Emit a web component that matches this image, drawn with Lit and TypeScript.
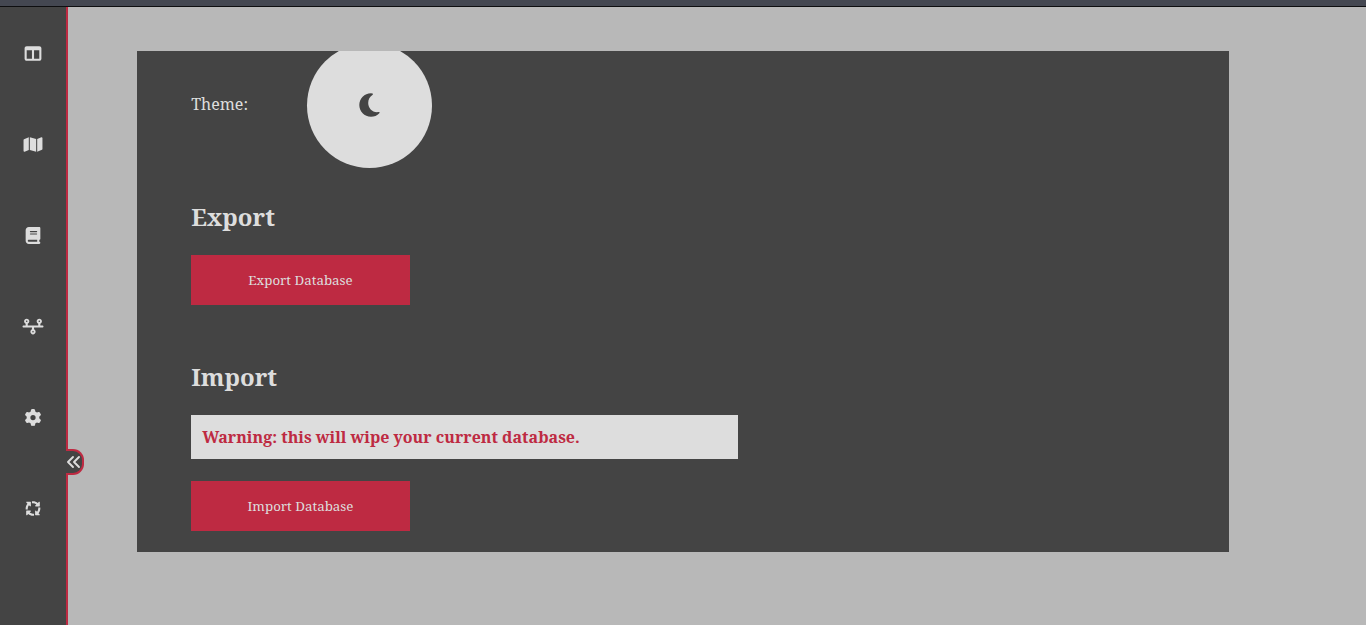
import { LitElement, html, css } from "lit";
import { customElement } from "lit/decorators.js";

interface NavItem {
  label: string;
  width: number;
  path: string;
}

// Icon em size in pixels, and the fixed box each icon is centred in.
const ICON_SIZE = 16.8;
const BOX_W = 24;
const BOX_H = 23;

const NAV: NavItem[] = [
  {
    label: "Dashboard",
    width: 512,
    path: "M0 96C0 60.7 28.7 32 64 32H448c35.3 0 64 28.7 64 64V416c0 35.3-28.7 64-64 64H64c-35.3 0-64-28.7-64-64V96zm64 64V416H224V160H64zm384 0H288V416H448V160z",
  },
  {
    label: "Map",
    width: 576,
    path: "M384 476.1L192 421.2V35.9L384 90.8V476.1zm32-1.2V88.4L543.1 37.5c15.8-6.3 32.9 5.3 32.9 22.3V394.6c0 9.8-6 18.6-15.1 22.3L416 474.8zM15.1 95.1L160 37.2V423.6L32.9 474.5C17.1 480.8 0 469.2 0 452.2V117.4c0-9.8 6-18.6 15.1-22.3z",
  },
  {
    label: "Journal",
    width: 448,
    path: "M96 0C43 0 0 43 0 96V416c0 53 43 96 96 96H384h32c17.7 0 32-14.3 32-32s-14.3-32-32-32V384c17.7 0 32-14.3 32-32V32c0-17.7-14.3-32-32-32H384 96zm0 384H352v64H96c-17.7 0-32-14.3-32-32s14.3-32 32-32zm32-246c0-8.8 7.2-16 16-16H336c8.8 0 16 7.2 16 16s-7.2 16-16 16H144c-8.8 0-16-7.2-16-16zm16 58H336c8.8 0 16 7.2 16 16s-7.2 16-16 16H144c-8.8 0-16-7.2-16-16s7.2-16 16-16z",
  },
  {
    label: "Timeline",
    width: 640,
    path: "M128 72a24 24 0 1 1 0 48 24 24 0 1 1 0-48zm32 97.3c28.3-12.3 48-40.5 48-73.3c0-44.2-35.8-80-80-80S48 51.8 48 96c0 32.8 19.7 61 48 73.3V224H32c-17.7 0-32 14.3-32 32s14.3 32 32 32H288v54.7c-28.3 12.3-48 40.5-48 73.3c0 44.2 35.8 80 80 80s80-35.8 80-80c0-32.8-19.7-61-48-73.3V288H608c17.7 0 32-14.3 32-32s-14.3-32-32-32H544V169.3c28.3-12.3 48-40.5 48-73.3c0-44.2-35.8-80-80-80s-80 35.8-80 80c0 32.8 19.7 61 48 73.3V224H160V169.3zM488 96a24 24 0 1 1 48 0 24 24 0 1 1 -48 0zM320 392a24 24 0 1 1 0 48 24 24 0 1 1 0-48z",
  },
  {
    label: "Settings",
    width: 512,
    path: "M495.9 166.6c3.2 8.7 .5 18.4-6.4 24.6l-43.3 39.4c1.1 8.3 1.7 16.8 1.7 25.4s-.6 17.1-1.7 25.4l43.3 39.4c6.9 6.2 9.6 15.9 6.4 24.6c-4.4 11.9-9.7 23.3-15.8 34.3l-4.7 8.1c-6.6 11-14 21.4-22.1 31.2c-5.9 7.2-15.7 9.6-24.5 6.8l-55.7-17.7c-13.4 10.3-28.2 18.9-44 25.4l-12.5 57.1c-2 9.1-9 16.3-18.2 17.8c-13.8 2.3-28 3.5-42.5 3.5s-28.7-1.2-42.5-3.5c-9.2-1.5-16.2-8.7-18.2-17.8l-12.5-57.1c-15.8-6.5-30.6-15.1-44-25.4L83.1 425.9c-8.8 2.8-18.6 .3-24.5-6.8c-8.1-9.8-15.5-20.2-22.1-31.2l-4.7-8.1c-6.1-11-11.4-22.4-15.8-34.3c-3.2-8.7-.5-18.4 6.4-24.6l43.3-39.4C64.6 273.1 64 264.6 64 256s.6-17.1 1.7-25.4L22.4 191.2c-6.9-6.2-9.6-15.9-6.4-24.6c4.4-11.9 9.7-23.3 15.8-34.3l4.7-8.1c6.6-11 14-21.4 22.1-31.2c5.9-7.2 15.7-9.6 24.5-6.8l55.7 17.7c13.4-10.3 28.2-18.9 44-25.4l12.5-57.1c2-9.1 9-16.3 18.2-17.8C227.3 1.2 241.5 0 256 0s28.7 1.2 42.5 3.5c9.2 1.5 16.2 8.7 18.2 17.8l12.5 57.1c15.8 6.5 30.6 15.1 44 25.4l55.7-17.7c8.8-2.8 18.6-.3 24.5 6.8c8.1 9.8 15.5 20.2 22.1 31.2l4.7 8.1c6.1 11 11.4 22.4 15.8 34.3zM256 336a80 80 0 1 0 0-160 80 80 0 1 0 0 160z",
  },
  {
    label: "Sync",
    width: 512,
    path: "M256 96c38.4 0 73.7 13.5 101.3 36.1l-32.6 32.6c-4.6 4.6-5.9 11.5-3.5 17.4s8.3 9.9 14.8 9.9H448c8.8 0 16-7.2 16-16V64c0-6.5-3.9-12.3-9.9-14.8s-12.9-1.1-17.4 3.5l-34 34C363.4 52.6 312.1 32 256 32c-10.9 0-21.5 .8-32 2.3V99.2c10.3-2.1 21-3.2 32-3.2zM132.1 154.7l32.6 32.6c4.6 4.6 11.5 5.9 17.4 3.5s9.9-8.3 9.9-14.8V64c0-8.8-7.2-16-16-16H64c-6.5 0-12.3 3.9-14.8 9.9s-1.1 12.9 3.5 17.4l34 34C52.6 148.6 32 199.9 32 256c0 10.9 .8 21.5 2.3 32H99.2c-2.1-10.3-3.2-21-3.2-32c0-38.4 13.5-73.7 36.1-101.3zM477.7 224H412.8c2.1 10.3 3.2 21 3.2 32c0 38.4-13.5 73.7-36.1 101.3l-32.6-32.6c-4.6-4.6-11.5-5.9-17.4-3.5s-9.9 8.3-9.9 14.8V448c0 8.8 7.2 16 16 16H448c6.5 0 12.3-3.9 14.8-9.9s1.1-12.9-3.5-17.4l-34-34C459.4 363.4 480 312.1 480 256c0-10.9-.8-21.5-2.3-32zM256 416c-38.4 0-73.7-13.5-101.3-36.1l32.6-32.6c4.6-4.6 5.9-11.5 3.5-17.4s-8.3-9.9-14.8-9.9H64c-8.8 0-16 7.2-16 16v112c0 6.5 3.9 12.3 9.9 14.8s12.9 1.1 17.4-3.5l34-34C148.6 459.4 199.9 480 256 480c10.9 0 21.5-.8 32-2.3V412.8c-10.3 2.1-21 3.2-32 3.2z",
  },
];

function centredViewBox(width: number): string {
  const unit = 512 / ICON_SIZE;
  const w = BOX_W * unit;
  const h = BOX_H * unit;
  return `${(width - w) / 2} ${(512 - h) / 2} ${w} ${h}`;
}

@customElement("app-root")
export class AppRoot extends LitElement {
  static styles = css`
    :host {
      display: flex;
      flex-direction: column;
      height: 625px;
      overflow: hidden;
      background: #b8b8b8;
      color: #dddddd;
      font-family: "Noto Serif", "Droid Serif", "DejaVu Serif Condensed", "DejaVu Serif", serif;
      font-size: 16px;
    }
    * { box-sizing: border-box; }
    svg { display: block; fill: currentColor; }
    .titlebar {
      flex: none;
      height: 7px;
      background: #444751;
      border-bottom: 1px solid #0e0e10;
    }
    .body { flex: 1; display: flex; min-height: 0; }
    .sidebar {
      position: relative;
      width: 68px;
      background: #444444;
      border-right: 2px solid #be2a42;
      display: flex;
      flex-direction: column;
      padding-top: 1px;
    }
    .item {
      height: 91px;
      display: flex;
      align-items: center;
      justify-content: center;
    }
    .toggle {
      position: absolute;
      left: 66px;
      top: 442px;
      width: 18px;
      height: 26px;
      background: #444444;
      border: 2px solid #be2a42;
      border-left: 0;
      border-radius: 0 11px 11px 0;
      display: flex;
      align-items: center;
    }
    .toggle svg { flex: none; }
    .main { flex: 1; padding: 44px 137px 0 69px; }
    .panel {
      height: 501px;
      overflow: hidden;
      background: #444444;
      padding-left: 54.2px;
    }
    .theme {
      display: flex;
      align-items: center;
      height: 125px;
      margin-top: -8px;
    }
    .theme-label { width: 115.8px; line-height: 22px; padding-bottom: 4px; }
    .theme-button {
      width: 125px;
      height: 125px;
      padding-bottom: 2px;
      border-radius: 50%;
      background: #dddddd;
      color: #444444;
      display: flex;
      align-items: center;
      justify-content: center;
    }
    h2 { font-size: 24px; line-height: 33px; margin: 0; font-weight: 700; }
    .export-title { margin-top: 32px; }
    .import-title { margin-top: 55px; }
    .action {
      display: block;
      width: 218.6px;
      height: 50px;
      padding: 0;
      border: 0;
      background: #be2a42;
      color: #dddddd;
      font-family: inherit;
      font-size: 13.333px;
    }
    .export-title + .action { margin-top: 22px; }
    .warning {
      width: 547px;
      height: 44px;
      margin: 22px 0 22px;
      padding: 11px;
      background: #dddddd;
      color: #be2a42;
      font-weight: 700;
      line-height: 22px;
    }
  `;

  render() {
    return html`
      <div class="titlebar"></div>
      <div class="body">
        <nav class="sidebar">
          ${NAV.map(
            (n) => html`<a class="item" aria-label=${n.label}>
              <svg width=${BOX_W} height=${BOX_H} viewBox=${centredViewBox(n.width)}>
                <path d=${n.path} />
              </svg>
            </a>`
          )}
          <div class="toggle">
            <svg width="15" height="14" viewBox="0 0 15 14">
              <path d="M7 2 L2 7 L7 12 M13 2 L8 7 L13 12" fill="none" stroke="currentColor"
                stroke-width="1.9" stroke-linecap="round" stroke-linejoin="round" />
            </svg>
          </div>
        </nav>
        <main class="main">
          <section class="panel">
            <div class="theme">
              <span class="theme-label">Theme:</span>
              <div class="theme-button" role="button" aria-label="Toggle theme">
                <svg width="21" height="24" viewBox="0 0 21 24">
                  <path d="M12 0.2 C13 .2 13.6 .4 14 .8 C14.2 1.2 14 1.5 13.4 1.9 C10.8 3.4 9.2 6.6 9.2 10 C9.2 15 13 19.2 18 19.2 C18.7 19.2 19.3 19.1 19.9 19.1 C20.6 19.1 20.8 19.6 20.3 20.2 C18.2 22.5 15.2 23.8 12 23.8 C5.4 23.8 .3 18.5 .3 12 C.3 5.5 5.4 .2 12 .2 Z" />
                </svg>
              </div>
            </div>
            <h2 class="export-title">Export</h2>
            <button class="action">Export Database</button>
            <h2 class="import-title">Import</h2>
            <div class="warning">Warning: this will wipe your current database.</div>
            <button class="action">Import Database</button>
          </section>
        </main>
      </div>
    `;
  }
}
